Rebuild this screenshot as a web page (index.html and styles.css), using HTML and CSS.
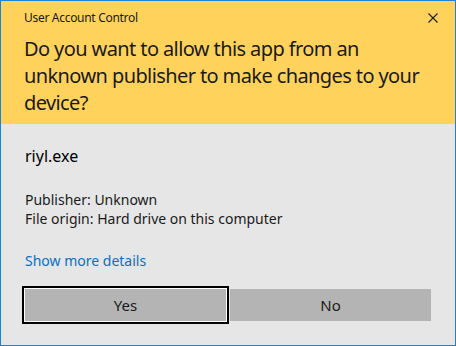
FILE: index.html
```html
<!DOCTYPE html>
<html lang="en">
<head>
    <meta charset="UTF-8">
    <title>User Account Control</title>
    <link rel="stylesheet" href="styles.css">
</head>
<body>

<div class="dialog">
    <!-- Yellow warning header -->
    <div class="header">
        <div class="title-bar">
            <span class="title">User Account Control</span>
            <span class="close">
                <svg width="10" height="10" viewBox="0 0 10 10">
                    <path d="M0.5 0.5 L9.5 9.5 M9.5 0.5 L0.5 9.5" stroke="#1a1a1a" stroke-width="1.1" fill="none"/>
                </svg>
            </span>
        </div>
        <h1 class="question">Do you want to allow this app from an unknown publisher to make changes to your device?</h1>
    </div>

    <!-- Program details -->
    <div class="content">
        <div class="app-name">riyl.exe</div>
        <div class="info">
            <div>Publisher: Unknown</div>
            <div>File origin: Hard drive on this computer</div>
        </div>
        <a class="details-link" href="#">Show more details</a>
        <div class="buttons">
            <button class="btn btn-focus">Yes</button>
            <button class="btn">No</button>
        </div>
    </div>
</div>

</body>
</html>
```

FILE: styles.css
```css
body {
    margin: 0;
    font-family: 'Noto Sans', sans-serif;
    color: #000;
}
.dialog {
    width: 456px;
    height: 346px;
    box-sizing: border-box;
    border: 1px solid #1883d7;
    background-color: #e6e6e6;
    display: flex;
    flex-direction: column;
}
.header {
    background-color: #ffd35b;
    height: 123px;
    box-sizing: border-box;
    padding: 7px 16px 0 23px;
}
.title-bar {
    display: flex;
    justify-content: space-between;
    align-items: center;
    height: 18px;
}
.title {
    font-size: 12px;
    letter-spacing: -0.3px;
    color: #1a1a1a;
}
.close {
    display: flex;
    padding: 1px 1px 0;
}
.question {
    margin: 9px 0 0;
    font-size: 20px;
    font-weight: normal;
    line-height: 27px;
    letter-spacing: -0.6px;
    color: #1a1a1a;
    width: 405px;
}
.content {
    padding: 22px 24px 0 24px;
}
.app-name {
    font-size: 16px;
    line-height: 20px;
}
.info {
    margin-top: 24px;
    font-size: 14px;
    line-height: 19px;
    color: #1a1a1a;
}
.details-link {
    display: inline-block;
    margin-top: 23px;
    font-size: 14px;
    line-height: 19px;
    color: #0a6fc2;
    text-decoration: none;
}
.buttons {
    display: flex;
    gap: 4px;
    margin-top: 18px;
}
.btn {
    width: 201px;
    height: 32px;
    border: none;
    background-color: #b4b4b4;
    font-family: 'Noto Sans', sans-serif;
    font-size: 15px;
    color: #1a1a1a;
    padding: 0;
}
.btn-focus {
    box-shadow: 0 0 0 1px #fff, 0 0 0 3px #000;
}
```
